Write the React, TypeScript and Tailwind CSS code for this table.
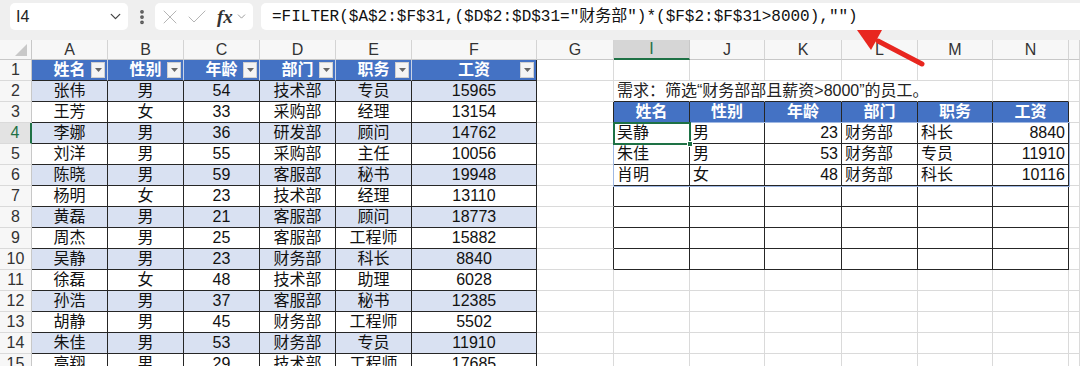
import { ChevronDown, X, Check, EllipsisVertical } from "lucide-react";

const LETTERS = ["", "A", "B", "C", "D", "E", "F", "G", "I", "J", "K", "L", "M", "N", ""];

const EMPLOYEES: string[][] = [
  ["张伟", "男", "54", "技术部", "专员", "15965"],
  ["王芳", "女", "33", "采购部", "经理", "13154"],
  ["李娜", "男", "36", "研发部", "顾问", "14762"],
  ["刘洋", "男", "55", "采购部", "主任", "10056"],
  ["陈晓", "男", "59", "客服部", "秘书", "19948"],
  ["杨明", "女", "23", "技术部", "经理", "13110"],
  ["黄磊", "男", "21", "客服部", "顾问", "18773"],
  ["周杰", "男", "25", "客服部", "工程师", "15882"],
  ["吴静", "男", "23", "财务部", "科长", "8840"],
  ["徐磊", "女", "48", "技术部", "助理", "6028"],
  ["孙浩", "男", "37", "客服部", "秘书", "12385"],
  ["胡静", "男", "45", "财务部", "工程师", "5502"],
  ["朱佳", "男", "53", "财务部", "专员", "11910"],
  ["高翔", "男", "29", "技术部", "工程师", "17685"],
];

const HEADERS = ["姓名", "性别", "年龄", "部门", "职务", "工资"];

const RESULT: string[][] = [
  ["吴静", "男", "23", "财务部", "科长", "8840"],
  ["朱佳", "男", "53", "财务部", "专员", "11910"],
  ["肖明", "女", "48", "财务部", "科长", "10116"],
];

const GRID =
  "grid grid-cols-[32px_76px_76px_76px_76px_76px_125px_77px_76px_75px_77px_76px_75px_76px_11px]";

function FilterButton() {
  return (
    <span className="absolute right-[2px] top-[2px] w-[14px] h-[16px] bg-[#f4f4f4] border border-[#d0d0d0] flex items-center justify-center">
      <svg width="7" height="4" viewBox="0 0 7 4">
        <polygon points="0,0 7,0 3.5,4" fill="#666" />
      </svg>
    </span>
  );
}

function Cell({ r, c }: { r: number; c: number }) {
  const inLeft = c <= 5 && r >= 1;
  const inRight = c >= 7 && c <= 12 && r >= 3 && r <= 10;

  let rc = "border-r-[#dadada]";
  let bc = "border-b-[#dadada]";
  if (inLeft || inRight) {
    rc = "border-r-[#262626]";
    bc = "border-b-[#262626]";
  }
  if (inLeft && r === 1 && c < 5) rc = "border-r-[#c9d3e6]";
  if (c === 6 && r >= 3 && r <= 10) rc = "border-r-[#262626]";
  if (r === 2 && c >= 7 && c <= 12) bc = "border-b-[#262626]";
  if (r === 2 && c >= 7 && c <= 10) rc = "border-r-white";

  let bg = "bg-white";
  let text = "";
  let align = "justify-center";
  let extra = "text-[#111]";
  let filter = false;

  if (inLeft) {
    if (r === 1) {
      bg = "bg-[#4472c4]";
      text = HEADERS[c];
      extra = "text-white font-bold";
      filter = true;
    } else {
      bg = r % 2 === 0 ? "bg-[#d9e1f2]" : "bg-white";
      text = EMPLOYEES[r - 2]?.[c] ?? "";
    }
  }

  if (inRight) {
    const k = c - 7;
    if (r === 3) {
      bg = "bg-[#4472c4]";
      text = HEADERS[k];
      extra = "text-white font-bold";
    } else if (r <= 6) {
      text = RESULT[r - 4][k];
      const numeric = k === 2 || k === 5;
      align = numeric ? "justify-end pr-[3px]" : "justify-start pl-[3px]";
    }
  }

  if (r === 2 && c === 7) {
    return (
      <div className={`h-[21px] border-r border-b ${rc} ${bc} bg-white flex items-center pl-[3px] overflow-visible whitespace-nowrap relative z-10 text-[16px] text-[#222] leading-none`}>
        需求：筛选“财务部部且薪资&gt;8000”的员工。
      </div>
    );
  }

  return (
    <div
      className={`relative h-[21px] border-r border-b ${rc} ${bc} ${bg} flex items-center ${align} ${extra} leading-none text-[16px] ${r === 2 && c >= 8 && c <= 12 ? "bg-transparent" : ""}`}
    >
      {text}
      {filter && <FilterButton />}
    </div>
  );
}

function SheetRow({ r }: { r: number }) {
  const selected = r === 4;
  return (
    <div className={GRID}>
      <div
        className={`h-[21px] border-b border-b-[#dadada] flex items-center justify-center text-[16px] leading-none ${
          selected
            ? "bg-[#e3e3e3] text-[#1e7145] border-r-2 border-r-[#1e7145]"
            : "bg-[#f7f7f7] text-[#333] border-r border-r-[#c8c8c8]"
        }`}
      >
        {r}
      </div>
      {Array.from({ length: 14 }, (_, c) => (
        <Cell key={c} r={r} c={c} />
      ))}
    </div>
  );
}

function FormulaBar() {
  return (
    <div className="h-[40px] bg-[#efefef] flex items-start pt-[3px]">
      <div className="ml-[10px] w-[118px] h-[27px] bg-white rounded-[5px] flex items-center justify-between pl-[6px] pr-[4px]">
        <span className="text-[16px] text-[#222]">I4</span>
        <ChevronDown size={17} strokeWidth={1.8} className="text-[#444]" />
      </div>
      <div className="w-[27px] h-[27px] flex items-center justify-center">
        <EllipsisVertical size={18} strokeWidth={3} className="text-[#555]" />
      </div>
      <div className="w-[98px] h-[27px] bg-white rounded-[5px] flex items-center pl-[3px]">
        <X size={24} strokeWidth={1} className="text-[#b5b5b5]" />
        <Check size={24} strokeWidth={1} className="text-[#b5b5b5] ml-[3px]" />
        <span className="ml-[8px] font-['Liberation_Serif',serif] italic font-bold text-[19px] text-[#333] leading-none">
          fx
        </span>
        <ChevronDown size={13} strokeWidth={1.5} className="text-[#888] ml-[2px]" />
      </div>
      <div className="ml-[8px] flex-1 h-[27px] bg-white rounded-l-[5px] flex items-center pl-[11px] font-['Liberation_Mono','Noto_Sans_CJK_SC',monospace] text-[16px] text-[#111] whitespace-nowrap">
        =FILTER($A$2:$F$31,($D$2:$D$31="财务部")*($F$2:$F$31&gt;8000),"")
      </div>
    </div>
  );
}

export default function App() {
  return (
    <div className="relative w-[1080px] h-[366px] overflow-hidden bg-white font-['Liberation_Sans','Noto_Sans_CJK_SC',sans-serif]">
      <FormulaBar />
      <div className="relative">
        <div className={GRID}>
          {LETTERS.map((l, i) =>
            i === 0 ? (
              <div key={i} className="h-[20px] bg-[#f7f7f7] border-r border-b border-r-[#c8c8c8] border-b-[#c8c8c8] flex items-end justify-end pr-[4px] pb-[3px]">
                <svg width="12" height="12" viewBox="0 0 12 12">
                  <polygon points="12,0 12,12 0,12" fill="#c8c8c8" />
                </svg>
              </div>
            ) : l === "I" ? (
              <div key={i} className="h-[20px] bg-[#d6d6d6] border-r border-r-[#c8c8c8] border-b-2 border-b-[#1e7145] flex items-center justify-center text-[16px] text-[#1e7145] leading-none">
                {l}
              </div>
            ) : (
              <div key={i} className="h-[20px] bg-[#f7f7f7] border-r border-b border-r-[#d4d4d4] border-b-[#c8c8c8] flex items-center justify-center text-[16px] text-[#333] leading-none">
                {l}
              </div>
            )
          )}
        </div>
        {Array.from({ length: 15 }, (_, i) => (
          <SheetRow key={i} r={i + 1} />
        ))}

        {/* spill range outline */}
        <div className="absolute left-[613px] top-[82px] w-[457px] h-[65px] border border-[#9fb8e3] pointer-events-none" />
        {/* active cell I4 */}
        <div className="absolute left-[613px] top-[82px] w-[78px] h-[23px] border-2 border-[#1e7145] pointer-events-none" />
        <div className="absolute left-[687px] top-[101px] w-[6px] h-[6px] bg-[#1e7145] border border-white pointer-events-none" />
      </div>

      <svg className="absolute inset-0 pointer-events-none" width="1080" height="366">
        <line x1="922" y1="64" x2="878" y2="41" stroke="#e8261f" strokeWidth="5" strokeLinecap="round" />
        <polygon points="857,30 882,30 871,50" fill="#e8261f" />
      </svg>
    </div>
  );
}
